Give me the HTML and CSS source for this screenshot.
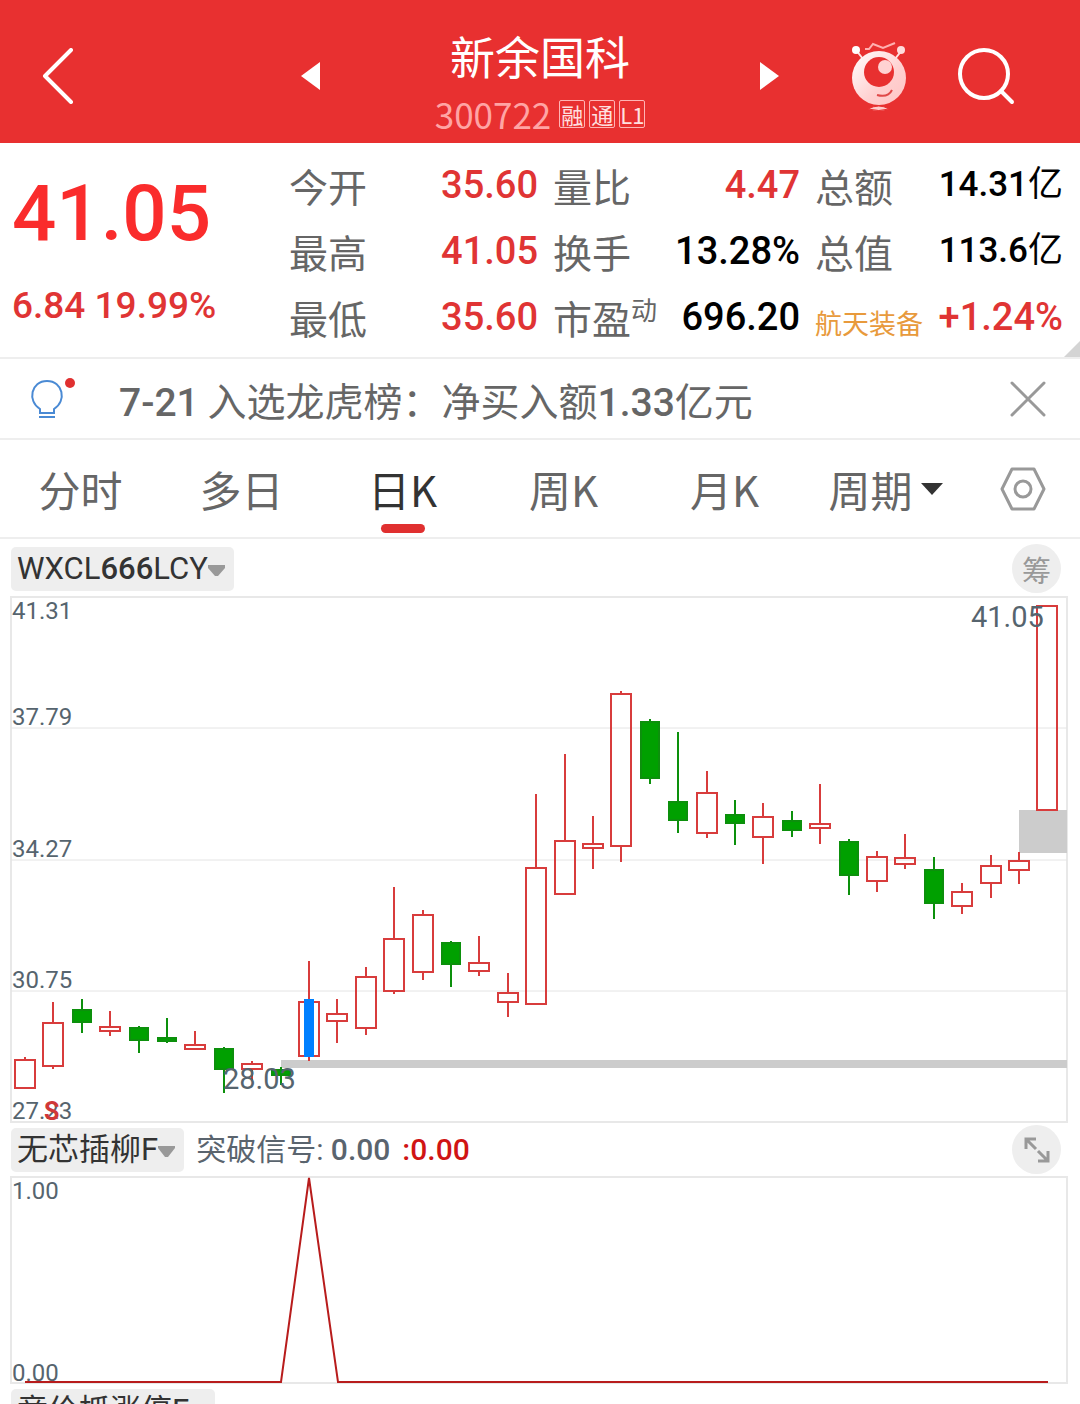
FILE: index.html
```html
<!DOCTYPE html>
<html lang="zh-CN">

<head>
  <meta charset="UTF-8">
  <meta name="viewport" content="width=device-width, initial-scale=1.0">
  <title>新余国科 300722</title>
  <link rel="stylesheet" href="styles.css">
</head>

<body>
  <header class="header">
    <div class="header-side">
      <button type="button" class="icon-btn" aria-label="返回">
        <svg width="32" height="56" viewBox="0 0 32 56"><path d="M29 2 L3 28 L29 54" fill="none" stroke="#fff" stroke-width="4" stroke-linecap="round" stroke-linejoin="round"/></svg>
      </button>
    </div>
    <div class="header-main">
      <button type="button" class="icon-btn" aria-label="上一只">
        <svg width="19" height="28" viewBox="0 0 19 28"><path d="M0 14 L19 0 V28 Z" fill="#fff"/></svg>
      </button>
      <div class="stock">
        <h1>新余国科</h1>
        <div class="code">
          <span class="number">300722</span>
          <span class="tag">融</span>
          <span class="tag">通</span>
          <span class="tag">L1</span>
        </div>
      </div>
      <button type="button" class="icon-btn" aria-label="下一只">
        <svg width="19" height="28" viewBox="0 0 19 28"><path d="M19 14 L0 0 V28 Z" fill="#fff"/></svg>
      </button>
    </div>
    <div class="header-side right">
      <button type="button" class="icon-btn" aria-label="智能助手">
        <svg width="56" height="70" viewBox="0 0 56 70">
          <defs>
            <linearGradient id="skin" x1="0" y1="0" x2="1" y2="1">
              <stop offset="0" stop-color="#fff"/>
              <stop offset="0.6" stop-color="#ffd0d0"/>
              <stop offset="1" stop-color="#ffc4c4"/>
            </linearGradient>
          </defs>
          <path d="M5 9 L12 18 M51 9 L44 18" stroke="#ffe4e4" stroke-width="2"/>
          <circle cx="5" cy="9" r="4" fill="#fff"/>
          <circle cx="50" cy="9" r="4" fill="#ffdcdc"/>
          <path d="M14 8 H18 L22 3 L32 7 L44 2" fill="none" stroke="#ffb0b0" stroke-width="2"/>
          <circle cx="28" cy="37" r="27" fill="url(#skin)"/>
          <circle cx="28" cy="31" r="15" fill="#e83030"/>
          <circle cx="34" cy="26" r="7" fill="#ffd2d2"/>
          <path d="M26 54 Q37 57 41 49" fill="none" stroke="#e04848" stroke-width="2"/>
          <path d="M17 68 Q28 62 38 68 Q28 71 17 68 Z" fill="#ffcaca" stroke="#e83030" stroke-width="1"/>
        </svg>
      </button>
      <button type="button" class="icon-btn" aria-label="搜索">
        <svg width="58" height="58" viewBox="0 0 58 58"><g fill="none" stroke="#fff" stroke-width="4" stroke-linecap="round"><circle cx="27" cy="27" r="24"/><path d="M44 44 L55 55"/></g></svg>
      </button>
    </div>
  </header>

  <section class="quote">
    <div class="latest">
      <div class="price">41.05</div>
      <div class="change"><span>6.84</span> <span>19.99%</span></div>
    </div>
    <dl class="column">
      <div><dt>今开</dt><dd class="up">35.60</dd></div>
      <div><dt>最高</dt><dd class="up">41.05</dd></div>
      <div><dt>最低</dt><dd class="up">35.60</dd></div>
    </dl>
    <dl class="column">
      <div><dt>量比</dt><dd class="up">4.47</dd></div>
      <div><dt>换手</dt><dd>13.28%</dd></div>
      <div><dt>市盈<sup>动</sup></dt><dd>696.20</dd></div>
    </dl>
    <dl class="column">
      <div><dt>总额</dt><dd class="amount">14.31<span class="unit">亿</span></dd></div>
      <div><dt>总值</dt><dd class="amount">113.6<span class="unit">亿</span></dd></div>
      <div><dt><a href="#sector" class="sector">航天装备</a></dt><dd class="up">+1.24%</dd></div>
    </dl>
  </section>

  <div class="news">
    <svg class="bulb" width="48" height="44" viewBox="0 0 48 44">
      <path d="M10 32 C-3 24 1 4 17 4 C33 4 37 24 24 32 V36 H10 Z" fill="none" stroke="#4a8ad4" stroke-width="2"/>
      <path d="M9 40 H25" stroke="#4a8ad4" stroke-width="2"/>
      <circle cx="40" cy="6" r="5" fill="#e03030"/>
    </svg>
    <a href="#news" class="news-text"><b>7-21</b> 入选龙虎榜：净买入额<b>1.33</b>亿元</a>
    <button type="button" class="icon-btn" aria-label="关闭">
      <svg width="36" height="36" viewBox="0 0 36 36"><path d="M2 2 L34 34 M34 2 L2 34" stroke="#999" stroke-width="3" stroke-linecap="round"/></svg>
    </button>
  </div>

  <nav class="tabs">
    <button type="button">分时</button>
    <button type="button">多日</button>
    <button type="button" class="active">日K</button>
    <button type="button">周K</button>
    <button type="button">月K</button>
    <button type="button">周期<svg width="22" height="12" viewBox="0 0 22 12"><path d="M0 0 H22 L11 12 Z" fill="#333"/></svg></button>
    <button type="button" aria-label="设置">
      <svg width="46" height="44" viewBox="0 0 46 44"><g fill="none" stroke="#999" stroke-width="3"><path d="M12 2 H34 L44 22 L34 42 H12 L2 22 Z" stroke-linejoin="round"/><circle cx="23" cy="22" r="8"/></g></svg>
    </button>
  </nav>

  <div class="indicator">
    <button type="button" class="chip">WXCL<b>666</b>LCY<svg width="17" height="11" viewBox="0 0 17 11"><path d="M0 0 H17 V3 L10 11 H7 L0 3 Z" fill="#999"/></svg></button>
    <button type="button" class="round">筹</button>
  </div>
  <svg class="chart" id="kline" viewBox="0 0 1058 527">
    <rect x="1" y="1" width="1056" height="525" class="frame"/>
    <path d="M1 132 H1057 M1 264 H1057 M1 395 H1057" class="grid"/>
    <rect x="271" y="464" width="786" height="8" class="gap"/>
    <rect x="1009" y="214" width="48" height="43" class="gap"/>
    <g id="candles"></g>
    <rect x="294" y="403" width="10" height="58" fill="#0080ff"/>
    <g class="axis">
      <text x="2" y="23">41.31</text>
      <text x="2" y="129">37.79</text>
      <text x="2" y="261">34.27</text>
      <text x="2" y="392">30.75</text>
      <text x="2" y="523">27.23</text>
    </g>
    <g class="mark">
      <text x="961" y="31">41.05</text>
      <text x="213" y="493">28.03</text>
    </g>
    <text x="34" y="524" class="sell">S</text>
  </svg>

  <div class="indicator">
    <button type="button" class="chip">无芯插柳F<svg width="17" height="11" viewBox="0 0 17 11"><path d="M0 0 H17 V2 L10 11 H7 L0 2 Z" fill="#999"/></svg></button>
    <span class="signal">突破信号: <b>0.00</b></span>
    <span class="signal red"><b>:0.00</b></span>
    <button type="button" class="round" aria-label="展开">
      <svg width="26" height="26" viewBox="0 0 26 26"><g fill="none" stroke="#999" stroke-width="3"><path d="M12 2 H2 V12 M2 2 L12 12"/><path d="M14 24 H24 V14 M24 24 L14 14"/></g></svg>
    </button>
  </div>
  <svg class="chart" viewBox="0 0 1058 208">
    <rect x="1" y="1" width="1056" height="206" class="frame"/>
    <g class="axis">
      <text x="2" y="23">1.00</text>
      <text x="2" y="205">0.00</text>
    </g>
    <polyline points="15,206 271,206 299,2 328,206 1038,206" class="line"/>
  </svg>

  <div class="indicator">
    <button type="button" class="chip">竞价抓涨停F<svg width="17" height="11" viewBox="0 0 17 11"><path d="M0 0 H17 V2 L10 11 H7 L0 2 Z" fill="#999"/></svg></button>
  </div>

  <script>
    // [最高, 实体上沿, 实体下沿, 最低, 是否上涨]
    const candles = [
      [461, 464, 492, 493, 1], [406, 427, 470, 473, 1], [403, 414, 426, 437, 0],
      [415, 431, 435, 440, 1], [430, 432, 444, 457, 0], [422, 442, 445, 447, 0],
      [435, 449, 453, 454, 1], [451, 453, 473, 497, 0], [465, 468, 473, 484, 1],
      [471, 474, 479, 489, 0], [365, 406, 460, 465, 1], [403, 418, 425, 447, 1],
      [371, 381, 432, 439, 1], [291, 343, 395, 398, 1], [314, 319, 376, 384, 1],
      [345, 347, 368, 391, 0], [340, 367, 375, 380, 1], [377, 397, 406, 421, 1],
      [198, 272, 408, 408, 1], [158, 245, 298, 298, 1], [220, 248, 252, 273, 1],
      [95, 98, 250, 266, 1], [123, 126, 182, 188, 0], [136, 206, 224, 237, 0],
      [175, 197, 237, 242, 1], [204, 219, 227, 249, 0], [207, 221, 241, 268, 1],
      [215, 225, 234, 241, 0], [188, 228, 232, 248, 1], [243, 246, 279, 299, 0],
      [255, 261, 285, 296, 1], [238, 262, 268, 273, 1], [261, 274, 307, 323, 0],
      [287, 296, 310, 318, 1], [259, 270, 287, 302, 1], [256, 265, 274, 288, 1],
      [10, 10, 214, 214, 1]
    ];

    const step = 28.4;
    let html = '';
    candles.forEach(([high, top, bottom, low, up], i) => {
      const x = Math.round(15 + i * step);
      const half = up ? 10 : 9;
      const cls = up ? 'rise' : 'fall';
      html += `<path class="${cls}" d="M${x} ${high} V${top} M${x} ${bottom} V${low} M${x - half} ${top} H${x + half} V${bottom} H${x - half} Z"/>`;
    });
    document.getElementById('candles').innerHTML = html;
  </script>
</body>

</html>
```
FILE: styles.css
```css
* {
  box-sizing: border-box;
}

body {
  margin: 0;
  height: 100vh;
  overflow: hidden;
  background: #fff;
  color: #666;
  font-family: "Noto Sans CJK SC", sans-serif;
}

button {
  margin: 0;
  padding: 0;
  border: none;
  background: none;
  color: inherit;
  font-family: inherit;
  cursor: pointer;
}

a {
  color: inherit;
  text-decoration: none;
}

svg {
  display: block;
}

b {
  font-weight: 500;
}

b,
dd,
.price,
.change,
.chip,
.signal,
.chart {
  font-family: Roboto, "Noto Sans CJK SC", sans-serif;
}

.header {
  display: grid;
  grid-template-columns: 1fr 478px 1fr;
  align-items: center;
  height: 143px;
  padding-top: 8px;
  background: #e83030;
  color: #fff;
}

.header-side {
  display: flex;
  align-items: center;
  padding-left: 42px;
}

.header-side.right {
  justify-content: flex-end;
  gap: 50px;
  padding: 0 65px 0 0;
}

.header-main {
  display: flex;
  align-items: center;
  justify-content: space-between;
}

.stock {
  padding-top: 16px;
  text-align: center;
}

h1 {
  margin: 0;
  font-size: 45px;
  font-weight: 400;
  line-height: 60px;
}

.code {
  display: flex;
  align-items: center;
  justify-content: center;
  gap: 4px;
  height: 56px;
}

.number {
  margin-right: 4px;
  color: #ffa4a4;
  font-size: 35px;
}

.tag {
  width: 26px;
  height: 28px;
  border: 1px solid #ffb4b4;
  border-radius: 2px;
  color: #ffe0e0;
  font-size: 22px;
  line-height: 26px;
  text-align: center;
}

.quote {
  position: relative;
  display: grid;
  grid-template-columns: 262fr 249fr 247fr 248fr;
  gap: 15px;
  height: 216px;
  padding: 9px 17px 0 12px;
  border-bottom: 2px solid #eee;
}

.quote::after {
  content: "";
  position: absolute;
  right: 0;
  bottom: 0;
  border: 8px solid #d4d4d4;
  border-top-color: transparent;
  border-left-color: transparent;
}

.price {
  margin-top: 16px;
  color: #fa2c2c;
  font-size: 78px;
  font-weight: 500;
  line-height: 92px;
}

.change {
  margin-top: 16px;
  color: #e03434;
  font-size: 37px;
  font-weight: 500;
  line-height: 60px;
  white-space: nowrap;
}

.column {
  margin: 0;
}

.column div {
  display: flex;
  justify-content: space-between;
  height: 66px;
  line-height: 66px;
  white-space: nowrap;
}

dt {
  font-size: 39px;
}

dd {
  margin: 0;
  color: #000;
  font-size: 38px;
  font-weight: 500;
}

dd.amount {
  font-size: 35px;
}

dd .unit {
  font-weight: 400;
}

dd.up {
  color: #e03434;
}

sup {
  font-size: 26px;
  line-height: 0;
}

.sector {
  color: #e89a3c;
  font-size: 27px;
}

.news {
  display: flex;
  align-items: center;
  height: 81px;
  padding: 0 34px 0 30px;
  border-bottom: 2px solid #eee;
}

.news-text {
  flex: 1;
  margin-left: 41px;
  padding-top: 4px;
  font-size: 39px;
  line-height: 60px;
}

.tabs {
  display: grid;
  grid-template-columns: repeat(6, 161fr) 114fr;
  height: 99px;
  border-bottom: 2px solid #eee;
}

.tabs button {
  position: relative;
  display: flex;
  align-items: center;
  justify-content: center;
  gap: 8px;
  font-size: 42px;
}

.tabs .active {
  color: #333;
}

.tabs .active::after {
  content: "";
  position: absolute;
  bottom: 4px;
  width: 44px;
  height: 9px;
  border-radius: 5px;
  background: #e03030;
}

.indicator {
  display: flex;
  align-items: center;
  height: 53px;
  padding: 0 19px 0 11px;
}

.tabs + .indicator {
  height: 57px;
  padding-top: 2px;
}

.chip {
  display: flex;
  align-items: center;
  height: 44px;
  padding: 0 9px 0 6px;
  border-radius: 5px;
  background: #eee;
  color: #333;
  font-size: 31px;
  line-height: 44px;
}

.chip svg {
  margin-top: 4px;
}

.signal {
  margin-left: 12px;
  color: #5a646e;
  font-size: 30px;
  line-height: 44px;
}

.signal.red {
  color: #d01414;
}

.round {
  display: flex;
  align-items: center;
  justify-content: center;
  width: 49px;
  height: 49px;
  margin-left: auto;
  border-radius: 50%;
  background: #eee;
  color: #999;
  font-size: 29px;
}

.chart {
  width: calc(100% - 22px);
  margin-left: 10px;
}

.frame {
  fill: none;
  stroke: #e8e8e8;
  stroke-width: 2;
}

.grid {
  stroke: #e4e4e4;
  stroke-width: 1;
}

.gap {
  fill: #ccc;
}

.rise {
  fill: none;
  stroke: #d83c3c;
  stroke-width: 2;
}

.fall {
  fill: #00a000;
  stroke: #0c900c;
  stroke-width: 2;
}

.axis {
  fill: #56646e;
  font-size: 24px;
}

.mark {
  fill: #56646e;
  font-size: 29px;
}

.sell {
  fill: #d03838;
  font-size: 25px;
  font-weight: 700;
}

.line {
  fill: none;
  stroke: #b81c1c;
  stroke-width: 2;
}
```
